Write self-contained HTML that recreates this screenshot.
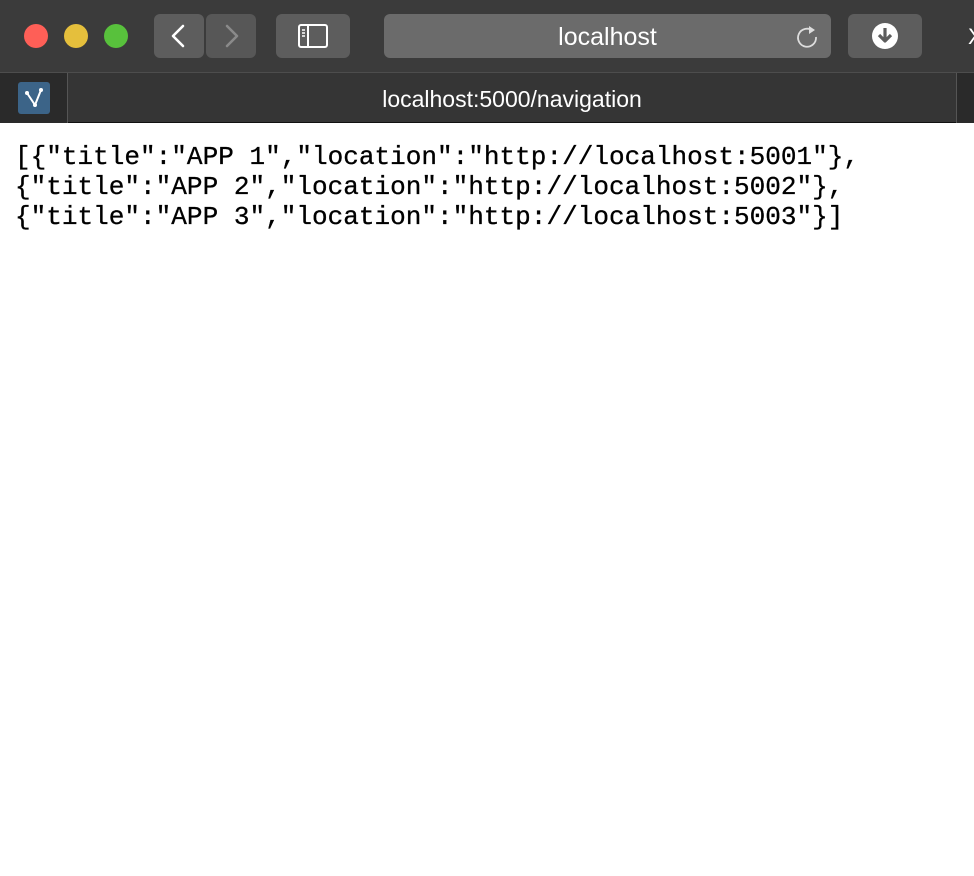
<!DOCTYPE html>
<html><head><meta charset="utf-8"><style>
*{margin:0;padding:0;box-sizing:border-box}
body{width:974px;height:876px;overflow:hidden;background:#fff;font-family:"Liberation Sans",sans-serif;position:relative}
.tb{position:absolute;left:0;top:0;width:974px;height:72px;background:#3b3b3b}
.tl{position:absolute;top:24px;width:24px;height:24px;border-radius:50%}
.btn{position:absolute;top:14px;height:44px;border-radius:6px;background:#5f5f5f}
.tabs{position:absolute;left:0;top:72px;width:974px;height:51px;background:#353535;border-top:1px solid #4d4d4d;border-bottom:1px solid #111}
pre{position:absolute;left:15px;top:142px;font-family:"Liberation Mono","Courier New",monospace;font-size:26.05px;line-height:30px;color:#000;-webkit-text-stroke:0.3px #000}
</style></head><body>
<div class="tb">
<div class="tl" style="left:24px;background:#fe5f57"></div>
<div class="tl" style="left:64px;background:#e5bf3c"></div>
<div class="tl" style="left:104px;background:#58c13c"></div>
<div class="btn" style="left:154px;width:50px;background:#5d5d5d"><svg width="50" height="44"><path d="M29 12 L19 22 L29 32" stroke="#fff" stroke-width="2.6" fill="none" stroke-linecap="round" stroke-linejoin="round"/></svg></div>
<div class="btn" style="left:206px;width:50px;background:#575757"><svg width="50" height="44"><path d="M21 12 L31 22 L21 32" stroke="#8a8a8a" stroke-width="2.6" fill="none" stroke-linecap="round" stroke-linejoin="round"/></svg></div>
<div class="btn" style="left:276px;width:74px;background:#5d5d5d"><svg width="74" height="44"><rect x="23" y="11" width="28" height="22" rx="2" stroke="#fff" stroke-width="2" fill="none"/><line x1="32" y1="11" x2="32" y2="33" stroke="#fff" stroke-width="2"/><path d="M26 16h3M26 19h3M26 22h3" stroke="#fff" stroke-width="1.4"/></svg></div>
<div class="btn" style="left:384px;width:447px;background:#6b6b6b;color:#fff;font-size:25px;text-align:center;line-height:46px">localhost
<svg width="28" height="28" style="position:absolute;right:10px;top:8px"><path d="M20 9 A9 9 0 1 0 23 15" stroke="#ddd" stroke-width="1.8" fill="none"/><path d="M16 4 L22 8 L16 12 Z" fill="#ddd"/></svg></div>
<div class="btn" style="left:848px;width:74px;background:#5d5d5d"><svg width="74" height="44"><circle cx="37" cy="22" r="13" fill="#fff"/><path d="M37 14v12M31 21l6 6 6-6" stroke="#5d5d5d" stroke-width="3.2" fill="none" stroke-linejoin="round"/></svg></div>
<div style="position:absolute;left:968px;top:24px;color:#fff;font-size:22px">X</div>
</div>
<div class="tabs">
<div style="position:absolute;left:0;top:0;width:68px;height:50px;background:#2a2a2a;border-right:1px solid #555"></div>
<div style="position:absolute;left:18px;top:9px;width:32px;height:32px;background:#3c6488;border-radius:3px"><svg width="32" height="32"><path d="M9 11 L17 23 L23 8" stroke="#fff" stroke-width="2" fill="none"/><circle cx="9" cy="11" r="2" fill="#fff"/><circle cx="17" cy="23" r="2" fill="#fff"/><circle cx="23" cy="8" r="2" fill="#fff"/></svg></div>
<div style="position:absolute;left:68px;top:0;width:888px;height:50px;color:#fff;font-size:23px;text-align:center;line-height:52px">localhost:5000/navigation</div>
<div style="position:absolute;left:956px;top:0;width:18px;height:50px;background:#2a2a2a;border-left:1px solid #555"></div>
</div>
<pre>[{"title":"APP 1","location":"http://localhost:5001"},
{"title":"APP 2","location":"http://localhost:5002"},
{"title":"APP 3","location":"http://localhost:5003"}]</pre>
</body></html>
